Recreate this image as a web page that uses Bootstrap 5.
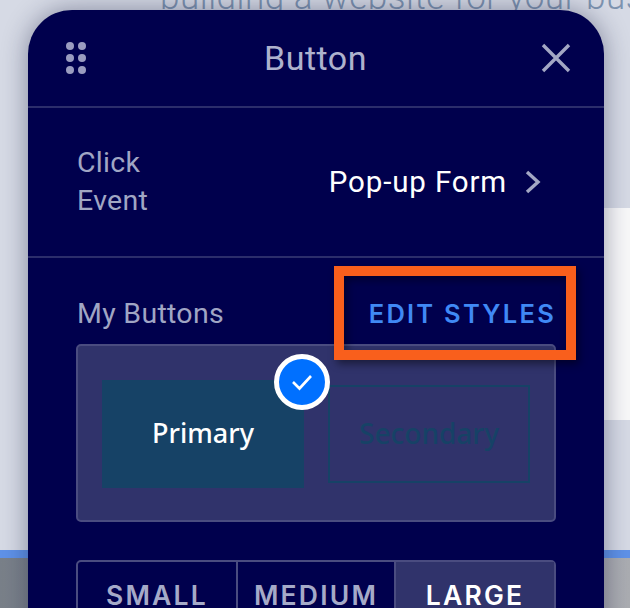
<!DOCTYPE html>
<html lang="en">
<head>
<meta charset="utf-8">
<title>Button panel</title>
<link href="https://cdn.jsdelivr.net/npm/bootstrap@5.3.0/dist/css/bootstrap.min.css" rel="stylesheet">
<style>
html,body{height:100%;overflow:hidden;background:#d6dae5;}
body{font-family:"Roboto","Liberation Sans",sans-serif;}
.stage{width:630px;height:608px;position:relative;overflow:hidden;}
.hero{height:550px;background:#d6dae5;overflow:hidden;}
.hero-line{margin:-22px 0 0 160px;height:40px;font-size:35px;font-weight:300;line-height:40px;color:#7d93b0;white-space:nowrap;letter-spacing:.55px;}
.hero-white{margin:190px 0 0 200px;height:212px;background:#f8f8f9;}
.blue-bar{height:8px;background:#5f92e8;}
.photo{height:50px;background:linear-gradient(90deg,#798089 0,#9a9da3 60%,#abadb2 100%);}
.panel{position:absolute;left:28px;top:10px;width:576px;height:640px;background:#00004d;border-radius:44px 44px 0 0;box-shadow:0 0 26px rgba(20,24,60,.42);color:#fff;}
.panel-head{height:98px;border-bottom:2px solid #2b2d6b;padding:0 33px 0 36px;position:relative;}
.panel-title{font-size:34px;font-weight:400;color:#aeb2cd;letter-spacing:.5px;position:absolute;left:0;right:0;top:28px;line-height:40px;text-align:center;margin-left:-1px;}
.grip{display:block;width:24px;height:36px;}
.close-x{display:block;width:30px;height:30px;}
.row-event{height:150px;border-bottom:2px solid #2b2d6b;padding:0 64px 0 49px;}
.evt-label{font-size:28.5px;font-weight:400;line-height:38px;color:#a0a6c4;letter-spacing:.3px;}
.evt-value{font-size:29.5px;font-weight:400;letter-spacing:.85px;line-height:36px;color:#fff;}
.chev{display:block;width:16px;height:24px;margin-left:18px;margin-right:-1px;}
.section{padding:0 48px;position:relative;}
.mybtn-head{height:86px;padding-top:37px;}
.mybtn-label{font-size:28.5px;font-weight:400;color:#a0a6c4;letter-spacing:.3px;line-height:38px;margin-left:1px;}
.edit-link{font-family:"Inter","Liberation Sans",sans-serif;font-size:25.5px;font-weight:600;letter-spacing:2.25px;line-height:38px;color:#4089f5;text-decoration:none;}
.style-box{height:178px;background:#30336b;border:2px solid #4a4c80;border-radius:5px;padding:34px 24px 0 24px;position:relative;gap:24px;}
.style-prim{width:202px;height:108px;background:#164266;font-size:27px;font-weight:500;color:#fff;position:relative;font-family:"Noto Sans","Liberation Sans",sans-serif;padding-bottom:2px;}
.style-sec{width:202px;height:98px;margin-top:5px;border:2px solid #164266;font-size:28px;font-weight:500;color:#164266;font-family:"Noto Sans","Liberation Sans",sans-serif;padding-bottom:3px;}
.tick{position:absolute;left:172px;top:-26px;width:56px;height:56px;border-radius:50%;background:#0070ff;border:5px solid #fff;}
.tick svg{display:block;width:46px;height:46px;}
.size-group{margin-top:38px;height:70px;border:2px solid #4a4c80;border-radius:5px 5px 0 0;}
.size-opt{font-family:"Inter","Liberation Sans",sans-serif;font-size:26.5px;font-weight:600;letter-spacing:2.2px;color:#a5aac8;padding-top:15px;line-height:36px;text-align:center;}
.size-opt + .size-opt{border-left:2px solid #4a4c80;}
.size-s{width:158px;}.size-m{width:158px;}
.size-l{background:#30336b;color:#fff;}
.callout{position:absolute;left:306px;top:256px;width:242px;height:94px;border:10px solid #f95f1c;box-shadow:3px 4px 8px rgba(0,0,0,.45),inset 3px 4px 8px rgba(0,0,0,.4);pointer-events:none;}
</style>
</head>
<body>
<div class="stage">
  <div class="hero">
    <div class="hero-line">building a website for your business</div>
    <div class="hero-white"></div>
  </div>
  <div class="blue-bar"></div>
  <div class="photo"></div>

  <div class="panel">
    <div class="panel-head d-flex justify-content-between align-items-center">
      <svg class="grip" viewBox="0 0 24 36" aria-hidden="true" fill="#9a9cc0">
        <circle cx="6" cy="6" r="4"/><circle cx="18" cy="6" r="4"/>
        <circle cx="6" cy="18" r="4"/><circle cx="18" cy="18" r="4"/>
        <circle cx="6" cy="30" r="4"/><circle cx="18" cy="30" r="4"/>
      </svg>
      <div class="panel-title">Button</div>
      <svg class="close-x" viewBox="0 0 30 30" aria-hidden="true" fill="none" stroke="#a3a7c4" stroke-width="3.4">
        <path d="M2 2 L28 28 M28 2 L2 28"/>
      </svg>
    </div>

    <div class="row-event d-flex justify-content-between align-items-center">
      <div class="evt-label">Click<br>Event</div>
      <div class="d-flex align-items-center">
        <span class="evt-value">Pop-up Form</span>
        <svg class="chev" viewBox="0 0 16 24" aria-hidden="true" fill="none" stroke="#a3a7c4" stroke-width="3.4">
          <path d="M2 2 L13 12 L2 22"/>
        </svg>
      </div>
    </div>

    <div class="section">
      <div class="mybtn-head d-flex justify-content-between align-items-start">
        <span class="mybtn-label">My Buttons</span>
        <a href="#" class="edit-link">EDIT STYLES</a>
      </div>
      <div class="style-box d-flex align-items-start">
        <div class="style-prim d-flex align-items-center justify-content-center">
          Primary
          <span class="tick">
            <svg viewBox="0 0 46 46" aria-hidden="true" fill="none" stroke="#fff" stroke-width="2.6">
              <path d="M14 23 L20.5 29.5 L32 17"/>
            </svg>
          </span>
        </div>
        <div class="style-sec d-flex align-items-center justify-content-center">Secondary</div>
      </div>
      <div class="size-group d-flex">
        <div class="size-opt size-s">SMALL</div>
        <div class="size-opt size-m">MEDIUM</div>
        <div class="size-opt size-l flex-grow-1">LARGE</div>
      </div>
    </div>
    <div class="callout"></div>
  </div>
</div>
<script src="https://cdn.jsdelivr.net/npm/bootstrap@5.3.0/dist/js/bootstrap.bundle.min.js"></script>
</body>
</html>
